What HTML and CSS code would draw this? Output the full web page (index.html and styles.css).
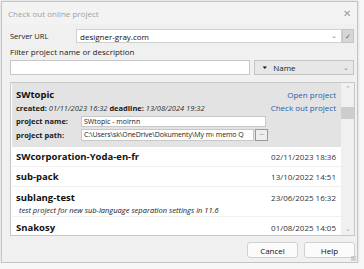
FILE: index.html
```html
<!DOCTYPE html>
<html lang="en">
<head>
    <meta charset="UTF-8">
    <title>Check out online project</title>
    <link rel="stylesheet" href="styles.css">
</head>
<body>
    <div class="dialog">
        <div class="titlebar">
            <span class="title">Check out online project</span>
            <span class="close">&#x2715;</span>
        </div>
        <div class="content">
            <div class="server-row">
                <label class="server-label">Server URL</label>
                <div class="combo">
                    <span>designer-gray.com</span>
                    <span class="chevron">&#x2304;</span>
                </div>
                <div class="check-btn">&#x2713;</div>
            </div>

            <div class="filter-label">Filter project name or description</div>
            <div class="filter-row">
                <div class="filter-input"></div>
                <div class="sort-select">
                    <span class="sort-arrow">&#9660;</span>
                    <span class="sort-name">Name</span>
                    <span class="chevron">&#x2304;</span>
                </div>
            </div>

            <div class="list">
                <div class="items">
                    <div class="item selected">
                        <div class="sel-head">
                            <span class="name">SWtopic</span>
                            <span class="link">Open project</span>
                        </div>
                        <div class="sel-meta">
                            <span><b>created:</b> <i>01/11/2023 16:32</i> <b>deadline:</b> <i>13/08/2024 19:32</i></span>
                            <span class="link">Check out project</span>
                        </div>
                        <div class="field-row">
                            <b class="field-label">project name:</b>
                            <div class="field name-field">SWtopic - moirnn</div>
                        </div>
                        <div class="field-row">
                            <b class="field-label">project path:</b>
                            <div class="field path-field">C:\Users\sk\OneDrive\Dokumenty\My m&#8249; memo Q</div>
                            <div class="dots-btn">...</div>
                        </div>
                    </div>
                    <div class="item">
                        <span class="name">SWcorporation-Yoda-en-fr</span>
                        <span class="date">02/11/2023 18:36</span>
                    </div>
                    <div class="item">
                        <span class="name">sub-pack</span>
                        <span class="date">13/10/2022 14:51</span>
                    </div>
                    <div class="item tall">
                        <div class="item-line">
                            <span class="name">sublang-test</span>
                            <span class="date">23/06/2025 16:32</span>
                        </div>
                        <div class="desc">test project for new sub-language separation settings in 11.6</div>
                    </div>
                    <div class="item last">
                        <span class="name">Snakosy</span>
                        <span class="date">01/08/2025 14:05</span>
                    </div>
                </div>
                <div class="scrollbar">
                    <span class="arrow">&#x2303;</span>
                    <div class="track"><div class="thumb"></div></div>
                    <span class="arrow">&#x2304;</span>
                </div>
            </div>

            <div class="buttons">
                <button>Cancel</button>
                <button>Help</button>
            </div>
        </div>
        <div class="grip"></div>
    </div>
</body>
</html>
```

FILE: styles.css
```css
body {
    margin: 0;
    background-color: #f7f7f7;
    font-family: "Open Sans", sans-serif;
    font-size: 8px;
    color: #1a1a1a;
}

.dialog {
    position: relative;
    margin: 1px 0 0 1px;
    width: 357px;
    height: 262px;
    box-sizing: border-box;
    border: 1px solid #c4c4c4;
    background-color: #f0f0f0;
    box-shadow: 0 0 3px rgba(0, 0, 0, 0.15);
}

.titlebar {
    height: 22px;
    display: flex;
    align-items: center;
    justify-content: space-between;
    padding: 0 6px 0 6px;
    background-color: #f3f3f3;
}

.title {
    color: #a0a0a0;
    font-size: 8px;
}

.close {
    color: #9a9a9a;
    font-size: 10px;
}

.content {
    padding: 5px 3px 0 8px;
}

.server-row {
    display: flex;
    align-items: center;
    height: 14px;
}

.server-label {
    width: 66px;
    font-size: 7.5px;
}

.combo {
    flex: 1;
    height: 14px;
    box-sizing: border-box;
    background-color: #fff;
    border: 1px solid #d0d0d0;
    display: flex;
    align-items: center;
    justify-content: space-between;
    padding: 0 4px 0 3px;
    color: #111;
}

.chevron {
    color: #888;
    font-size: 7px;
    line-height: 4px;
}

.check-btn {
    width: 12px;
    height: 14px;
    box-sizing: border-box;
    background-color: #d6d6d6;
    border: 1px solid #c4c4c4;
    color: #666;
    font-size: 7px;
    display: flex;
    align-items: center;
    justify-content: center;
}

.filter-label {
    margin-top: 3px;
    height: 12px;
    line-height: 12px;
}

.filter-row {
    display: flex;
    gap: 4px;
    margin-top: 2px;
    height: 15px;
}

.filter-input {
    width: 241px;
    box-sizing: border-box;
    background-color: #fff;
    border: 1px solid #c8c8c8;
}

.sort-select {
    width: 100px;
    box-sizing: border-box;
    background-color: #e7e7e7;
    border: 1px solid #c4c4c4;
    display: flex;
    align-items: center;
    padding: 0 4px 0 6px;
}

.sort-arrow {
    font-size: 7px;
    color: #111;
    transform: scaleY(0.6);
}

.sort-name {
    flex: 1;
    margin-left: 5px;
}

.list {
    margin-top: 7px;
    width: 345px;
    height: 154px;
    box-sizing: border-box;
    border: 1px solid #c8c8c8;
    background-color: #fff;
    display: flex;
    overflow: hidden;
}

.items {
    flex: 1;
    padding-left: 1px;
}

.item {
    height: 20px;
    box-sizing: border-box;
    border-bottom: 1px solid #f0f0f0;
    display: flex;
    align-items: center;
    justify-content: space-between;
    padding: 0 5px 0 4px;
}

.item.tall {
    height: 30px;
    flex-direction: column;
    align-items: stretch;
    justify-content: flex-start;
    padding-top: 4px;
}

.item.last {
    border-bottom: none;
}

.item-line {
    display: flex;
    justify-content: space-between;
    align-items: center;
}

.name {
    font-weight: bold;
    font-size: 9.5px;
    color: #111;
}

.date {
    color: #333;
}

.desc {
    font-style: italic;
    font-size: 7.5px;
    padding-left: 3px;
    margin-top: 1px;
}

.item.selected {
    height: 64px;
    background-color: #e3e3e3;
    flex-direction: column;
    align-items: stretch;
    justify-content: flex-start;
    padding-top: 4px;
    border-bottom: none;
}

.sel-head,
.sel-meta {
    display: flex;
    justify-content: space-between;
    align-items: center;
}

.sel-head {
    height: 14px;
}

.sel-meta {
    height: 13px;
    font-size: 7.5px;
}

.sel-meta i {
    color: #333;
}

.link {
    color: #2a5da8;
    font-size: 8px;
}

.field-row {
    display: flex;
    align-items: center;
    height: 14px;
    font-size: 7.5px;
}

.field-label {
    width: 65px;
}

.field {
    height: 11px;
    line-height: 10px;
    box-sizing: border-box;
    border: 1px solid #c8c8c8;
    background-color: #fff;
    padding: 0 2px;
    white-space: nowrap;
    overflow: hidden;
    font-size: 7px;
}

.name-field {
    width: 185px;
}

.path-field {
    width: 173px;
    height: 12px;
    letter-spacing: -0.1px;
}

.dots-btn {
    width: 13px;
    height: 12px;
    box-sizing: border-box;
    border: 1px solid #999;
    background-color: #eee;
    font-size: 6px;
    line-height: 7px;
    text-align: center;
    margin-left: 1px;
}

.scrollbar {
    width: 13px;
    background-color: #f0f0f0;
    display: flex;
    flex-direction: column;
    align-items: center;
}

.arrow {
    height: 12px;
    color: #aaa;
    font-size: 7px;
    line-height: 12px;
}

.track {
    flex: 1;
    width: 100%;
    padding-top: 12px;
}

.thumb {
    height: 12px;
    background-color: #cdcdcd;
}

.buttons {
    display: flex;
    justify-content: flex-end;
    gap: 6px;
    margin-top: 6px;
    width: 345px;
}

button {
    width: 51px;
    height: 16px;
    padding: 0;
    font-family: "Open Sans", sans-serif;
    font-size: 8px;
    color: #111;
    background-color: #fbfbfb;
    border: 1px solid #d0d0d0;
    border-radius: 3px;
}

.grip {
    position: absolute;
    right: 1px;
    bottom: 1px;
    width: 5px;
    height: 5px;
    background-image: radial-gradient(circle, #aaa 0.6px, transparent 0.8px);
    background-size: 2px 2px;
}
```
